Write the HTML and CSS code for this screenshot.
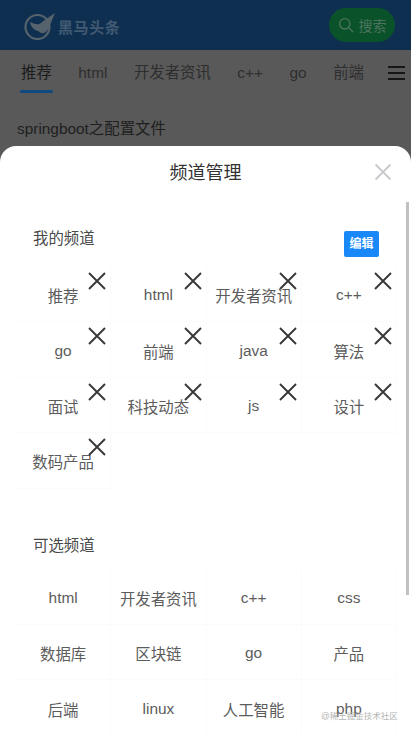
FILE: index.html
```html
<!DOCTYPE html>
<html lang="zh-CN">
<head>
<meta charset="utf-8">
<title>频道管理</title>
<link rel="stylesheet" href="styles.css">
</head>
<body>
<div class="page">
  <header class="topbar">
    <div class="brand">
      <svg class="logo" width="32" height="30" viewBox="0 0 32 30">
        <circle cx="13.5" cy="17" r="12" fill="none" stroke="#56636d" stroke-width="2.2"/>
        <path d="M6 12 C10 13 13 16 17 13 L22 9 L31 3 L26 15 C24 21 21 24 17 23 L14 21 C10 20 7 17 6 12Z" fill="#56636d"/>
        <path d="M8 11 L13 9 L17 11 L12 14Z" fill="#0e2f50"/>
      </svg>
      <span class="brand-name">黑马头条</span>
    </div>
    <div class="search">
      <svg width="16" height="16" viewBox="0 0 16 16"><circle cx="6.8" cy="6.8" r="5.2" fill="none" stroke="#4d745e" stroke-width="1.3"/><path d="M10.6 10.6 L15 15" stroke="#4d745e" stroke-width="1.3"/></svg>
      <span>搜索</span>
    </div>
  </header>
  <nav class="tabs">
    <span class="tab tab-on">推荐</span>
    <span class="tab">html</span>
    <span class="tab">开发者资讯</span>
    <span class="tab">c++</span>
    <span class="tab">go</span>
    <span class="tab">前端</span>
    <span class="burger"><i></i><i></i><i></i></span>
  </nav>
  <p class="article">springboot之配置文件</p>
</div>

<section class="sheet">
  <div class="sheet-head">
    <h2 class="sheet-title">频道管理</h2>
    <svg class="sheet-close" width="18" height="18" viewBox="0 0 18 18"><path d="M1.5 1.5 L16.5 16.5 M16.5 1.5 L1.5 16.5" stroke="#c8c9cc" stroke-width="1.8"/></svg>
  </div>
  <div class="sheet-body">
    <div class="section-head">
      <span class="section-title">我的频道</span>
      <span class="edit-btn">编辑</span>
    </div>
    <div class="grid">
      <div class="cell"><span>推荐</span><svg class="x" viewBox="0 0 20 20"><path d="M2 2 L18 18 M18 2 L2 18"/></svg></div>
      <div class="cell"><span>html</span><svg class="x" viewBox="0 0 20 20"><path d="M2 2 L18 18 M18 2 L2 18"/></svg></div>
      <div class="cell"><span>开发者资讯</span><svg class="x" viewBox="0 0 20 20"><path d="M2 2 L18 18 M18 2 L2 18"/></svg></div>
      <div class="cell"><span>c++</span><svg class="x" viewBox="0 0 20 20"><path d="M2 2 L18 18 M18 2 L2 18"/></svg></div>
      <div class="cell"><span>go</span><svg class="x" viewBox="0 0 20 20"><path d="M2 2 L18 18 M18 2 L2 18"/></svg></div>
      <div class="cell"><span>前端</span><svg class="x" viewBox="0 0 20 20"><path d="M2 2 L18 18 M18 2 L2 18"/></svg></div>
      <div class="cell"><span>java</span><svg class="x" viewBox="0 0 20 20"><path d="M2 2 L18 18 M18 2 L2 18"/></svg></div>
      <div class="cell"><span>算法</span><svg class="x" viewBox="0 0 20 20"><path d="M2 2 L18 18 M18 2 L2 18"/></svg></div>
      <div class="cell"><span>面试</span><svg class="x" viewBox="0 0 20 20"><path d="M2 2 L18 18 M18 2 L2 18"/></svg></div>
      <div class="cell"><span>科技动态</span><svg class="x" viewBox="0 0 20 20"><path d="M2 2 L18 18 M18 2 L2 18"/></svg></div>
      <div class="cell"><span>js</span><svg class="x" viewBox="0 0 20 20"><path d="M2 2 L18 18 M18 2 L2 18"/></svg></div>
      <div class="cell"><span>设计</span><svg class="x" viewBox="0 0 20 20"><path d="M2 2 L18 18 M18 2 L2 18"/></svg></div>
      <div class="cell"><span>数码产品</span><svg class="x" viewBox="0 0 20 20"><path d="M2 2 L18 18 M18 2 L2 18"/></svg></div>
    </div>
    <div class="section-head section-head-2">
      <span class="section-title">可选频道</span>
    </div>
    <div class="grid">
      <div class="cell"><span>html</span></div>
      <div class="cell"><span>开发者资讯</span></div>
      <div class="cell"><span>c++</span></div>
      <div class="cell"><span>css</span></div>
      <div class="cell"><span>数据库</span></div>
      <div class="cell"><span>区块链</span></div>
      <div class="cell"><span>go</span></div>
      <div class="cell"><span>产品</span></div>
      <div class="cell"><span>后端</span></div>
      <div class="cell"><span>linux</span></div>
      <div class="cell"><span>人工智能</span></div>
      <div class="cell"><span>php</span></div>
    </div>
  </div>
  <div class="scroll-thumb"></div>
  <div class="watermark">@稀土掘金技术社区</div>
</section>
</body>
</html>
```

FILE: styles.css
```css
* { box-sizing: border-box; }
html, body { margin: 0; padding: 0; height: 100%; overflow: hidden; }
body {
  position: relative;
  width: 411px;
  height: 734px;
  background: #595959;
  font-family: "Liberation Sans", "Noto Sans CJK SC", sans-serif;
  color: #242424;
}
.page { height: 100%; }
.topbar {
  height: 50px;
  background: #0e2f50;
  display: flex;
  align-items: center;
  justify-content: space-between;
  padding: 0 16px 0 24px;
}
.brand { display: flex; align-items: center; gap: 2px; }
.logo { display: block; }
.brand-name { font-size: 15px; font-weight: 700; color: #415a72; letter-spacing: 0.6px; position: relative; top: 1px; }
.search {
  width: 66px;
  height: 34px;
  margin-bottom: 1px;
  border-radius: 17px;
  background: #0a5229;
  display: flex;
  align-items: center;
  justify-content: center;
  gap: 5px;
  font-size: 14px;
  color: #4d745e;
}
.tabs {
  height: 50px;
  display: flex;
  align-items: center;
  padding: 0 6px 4px 21px;
  position: relative;
  font-size: 15.4px;
  color: #2e2e2e;
}
.tab { margin-right: 26.5px; line-height: 20px; }
.tab-on { color: #1c1c1c; position: relative; }
.tab-on::after {
  content: "";
  position: absolute;
  left: -1px;
  right: -1px;
  top: 27px;
  height: 3px;
  border-radius: 2px;
  background: #0f4a80;
}
.burger {
  position: absolute;
  left: 388px;
  top: 16px;
  width: 17px;
  display: flex;
  flex-direction: column;
  gap: 4px;
}
.burger i { display: block; height: 2px; background: #161616; }
.article { margin: 19px 0 0 17px; font-size: 15.4px; line-height: 20px; color: #202020; }

.sheet {
  position: absolute;
  left: 0;
  right: 0;
  top: 146px;
  bottom: 0;
  background: #fff;
  border-radius: 16px 16px 0 0;
  overflow: hidden;
}
.sheet-head { height: 52px; padding-bottom: 2px; position: relative; display: flex; justify-content: center; align-items: center; }
.sheet-title { margin: 0; font-size: 18px; font-weight: 400; color: #323233; }
.sheet-close { position: absolute; left: 374px; top: 17px; }
.sheet-body { height: 536px; overflow: hidden; }
.section-head {
  height: 69px;
  padding: 25px 32px 0 33px;
  display: flex;
  justify-content: space-between;
  align-items: flex-start;
}
.section-head-2 { height: 81px; padding-top: 41px; }
.section-title { font-size: 15.4px; line-height: 32px; height: 32px; color: #4a4a4a; }
.edit-btn {
  width: 35px;
  height: 26px;
  margin-top: 8px;
  border-radius: 2px;
  background: #1989fa;
  color: #fff;
  font-size: 12px;
  font-weight: 700;
  text-align: center;
  line-height: 26px;
}
.grid {
  margin-left: 16px;
  width: 381px;
  display: grid;
  grid-template-columns: repeat(4, 95.25px);
  grid-auto-rows: 55.4px;
}
.cell {
  position: relative;
  display: flex;
  align-items: center;
  justify-content: center;
  border-right: 1px solid #fbfbfb;
  border-bottom: 1px solid #fbfbfb;
  font-size: 15.4px;
  color: #5c5c5c;
}
.cell span { white-space: nowrap; position: relative; top: 1px; }
.x {
  position: absolute;
  right: 3px;
  top: 4px;
  width: 20px;
  height: 20px;
  fill: none;
  stroke: #383838;
  stroke-width: 1.9;
}
.scroll-thumb {
  position: absolute;
  left: 406px;
  top: 56px;
  width: 3px;
  height: 393px;
  background: #c1c1c1;
}
.watermark {
  position: absolute;
  left: 321px;
  top: 564px;
  font-size: 8.5px;
  line-height: 12px;
  color: #b4b4b4;
  white-space: nowrap;
}
```
